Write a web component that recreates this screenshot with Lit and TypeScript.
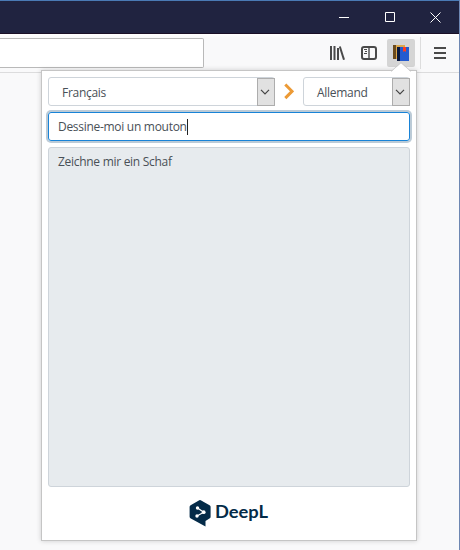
import { LitElement, html, css } from "lit";
import { customElement, property } from "lit/decorators.js";

@customElement("lang-select")
class LangSelect extends LitElement {
  @property() label = "";
  static styles = css`
    :host { display: block; }
    .box { display: flex; box-sizing: border-box; height: 29px; border: 1px solid #ced4da; border-radius: 3px; background: #fff; }
    .text { flex: 1; padding-left: 13px; line-height: 29px; white-space: nowrap; }
    .drop { box-sizing: border-box; width: 18px; height: 28px; margin: 0 -1px 0 0; padding-right: 2px; border: 1px solid #adadad; background: #e1e1e1; display: flex; align-items: center; justify-content: center; }
    svg { display: block; flex: none; }
  `;
  render() {
    return html`<div class="box"><span class="text">${this.label}</span>
      <span class="drop"><svg width="10" height="6" viewBox="0 0 10 6"><path d="M1 .8 5 4.8 9 .8" fill="none" stroke="#444" stroke-width="1.2"/></svg></span></div>`;
  }
}

@customElement("app-root")
class AppRoot extends LitElement {
  static styles = css`
    :host { display: block; position: relative; width: 460px; height: 550px; overflow: hidden; background: #f9f9fa;
      font: 12px "Open Sans", "Noto Sans", sans-serif; letter-spacing: -0.29px; color: #495057; }
    svg { display: block; }
    .window { box-sizing: border-box; height: 550px; border-right: 1px solid #6e87b2; }
    .title { box-sizing: border-box; height: 34px; border-top: 1px solid #4a7ab5; border-bottom: 1px solid #1a0f26; background: #202340; display: flex; justify-content: flex-end; }
    .control { width: 46px; height: 32px; display: flex; align-items: center; justify-content: center; }
    .close { position: relative; left: -0.5px; }
    .bar { box-sizing: border-box; height: 39px; border-bottom: 1px solid #dcdcdd; background: linear-gradient(#fff, #f9f9fa 4px); display: flex; align-items: flex-start; padding-top: 4px; }
    .url { box-sizing: border-box; width: 204px; height: 30px; border: 1px solid #b9b9b9; border-left: 0; border-radius: 0 2px 2px 0; background: #fff; margin-right: 119px; }
    .tool { width: 28px; height: 28px; margin-top: 1px; border-radius: 2px; display: flex; align-items: center; justify-content: center; }
    .tool + .tool { margin-left: 4px; }
    .active { background: #d5d5d5; }
    .rule { width: 1px; height: 32px; background: #ddd; margin: -1px 5px 0; }
    .popup { box-sizing: border-box; position: absolute; left: 41px; top: 70px; width: 376px; height: 471px; padding: 6px;
      border: 1px solid #c5c5c5; background: #fff; box-shadow: 0 0 5px rgba(0,0,0,.18); display: flex; flex-direction: column; }
    .arrow { position: absolute; left: 349px; top: -9px; }
    .row { display: flex; align-items: center; height: 29px; }
    .from { width: 227px; }
    .to { width: 107px; }
    .chevron { width: 28px; display: flex; justify-content: center; }
    .source { box-sizing: border-box; height: 29px; margin-top: 6px; padding-left: 9px; border: 1px solid #1883d7; border-radius: 3px; box-shadow: 0 0 0 2px #bccbd7; display: flex; align-items: center; white-space: nowrap; }
    .caret { width: 1px; height: 16px; background: #222; }
    .result { box-sizing: border-box; height: 340px; margin-top: 6px; padding: 6px 9px; border: 1px solid #ced4da; border-radius: 3px; background: #e7ebee; line-height: 16px; }
    .brand { display: flex; justify-content: center; padding-top: 12px; }
    .name { font: 700 16.5px Lato, sans-serif; letter-spacing: 0; fill: #042b48; }
  `;
  render() {
    return html`
      <div class="window">
        <div class="title">
          <span class="control"><svg width="12" height="11"><path d="M1 5.5h10" stroke="#fff"/></svg></span>
          <span class="control"><svg width="10" height="10"><path d="M.5.5h9v9h-9z" fill="none" stroke="#fff"/></svg></span>
          <span class="control close"><svg width="11" height="11"><path d="m.5.5 10 10m0-10-10 10" stroke="#fff"/></svg></span>
        </div>
        <div class="bar">
          <div class="url"></div>
          <span class="tool"><svg width="16" height="16" fill="none" stroke="#4a4a4a"><path d="M2 1v14M5.5 1v14M9 3v12" stroke-width="2"/><path d="m10.8 1.5 4.2 13.3" stroke-width="2"/></svg></span>
          <span class="tool"><svg width="16" height="16" fill="none" stroke="#4a4a4a"><rect x="1" y="2" width="14" height="12" rx="2" stroke-width="2"/><path d="M8 2v12" stroke-width="1.4"/><path d="M3 4.5h3M4 6.5h2M3 8.5h3"/></svg></span>
          <span class="tool active"><svg width="16" height="16"><path d="M0 0h12v14H0z" fill="#dda94d"/><path d="M0 0h3v14H0z" fill="#6b4a1c"/><path d="M4 2h12v14H4z" fill="#245bd0"/><path d="M4 2h3v14H4z" fill="#08183f"/><path d="M10 2h3v5l-1.5-1L10 7z" fill="#ff3b20"/></svg></span>
          <span class="rule"></span>
          <span class="tool"><svg width="12" height="12"><path d="M0 1h12M0 6h12M0 11h12" stroke="#4a4a4a" stroke-width="2"/></svg></span>
        </div>
      </div>
      <div class="popup">
        <svg class="arrow" width="20" height="10"><path d="M0 10 10 1l10 9" fill="#fff"/><path d="M0 9.5 10 .7l10 8.8" fill="none" stroke="#c5c5c5" stroke-width=".8"/></svg>
        <div class="row">
          <lang-select class="from" label="Français"></lang-select>
          <span class="chevron"><svg width="10" height="18"><path d="m1.3 1.5 6.7 6.8-6.7 6.8" fill="none" stroke="#ec9a35" stroke-width="3"/></svg></span>
          <lang-select class="to" label="Allemand"></lang-select>
        </div>
        <div class="source"><span>Dessine-moi un mouton</span><i class="caret"></i></div>
        <div class="result">Zeichne mir ein Schaf</div>
        <div class="brand">
          <svg width="80" height="28"><path d="M1.6 6.2 10.3 1.2q.7-.4 1.4 0L20.6 6.2q1 .6 1 1.6v9.9q0 1-.8 1.5L16.5 22v5.5L1.4 19.2Q.6 18.7.6 17.8V7.7q0-.9 1-1.5z" fill="#042b48"/>
            <path d="m8.5 9 6.2 4.2L8 17" fill="none" stroke="#fff" stroke-width="1.2"/><g fill="#fff"><circle cx="8.5" cy="9" r="1.7"/><circle cx="14.7" cy="13.2" r="1.9"/><circle cx="8" cy="17" r="1.7"/></g>
            <text class="name" x="26" y="19" textLength="53" lengthAdjust="spacingAndGlyphs">DeepL</text></svg>
        </div>
      </div>`;
  }
}
